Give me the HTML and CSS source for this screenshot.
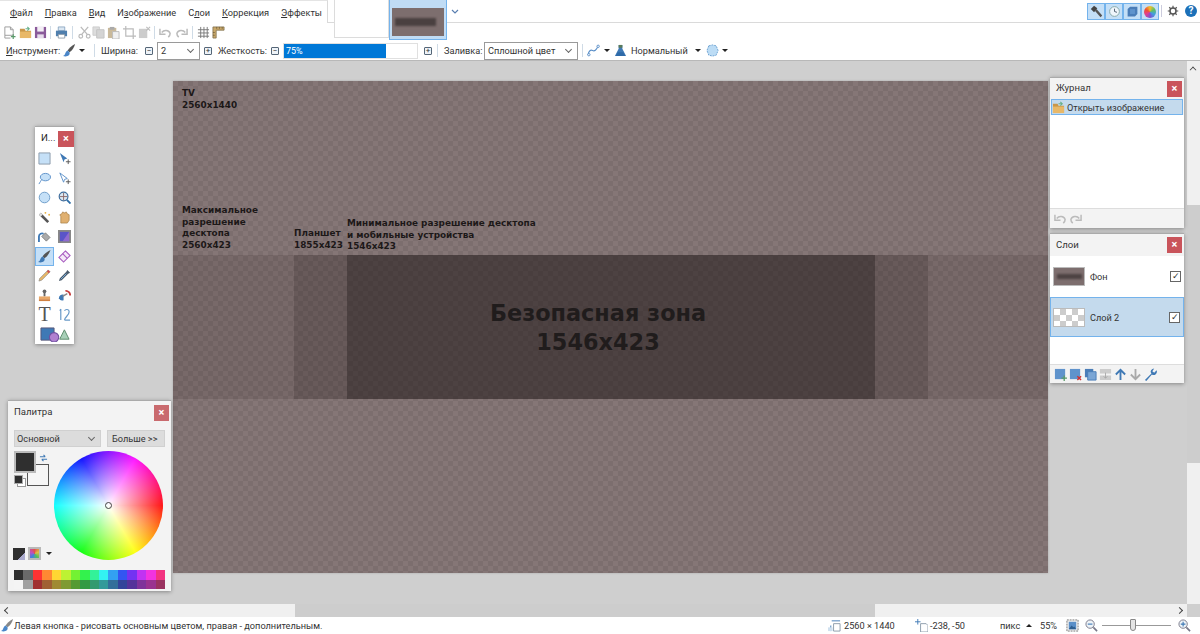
FILE: index.html
```html
<!DOCTYPE html>
<html lang="ru">
<head>
    <meta charset="UTF-8">
    <title>paint.net</title>
    <link rel="stylesheet" href="styles.css">
</head>
<body>
<div class="top">
    <!-- Меню и вкладки -->
    <div class="menu-row">
        <div class="menu-tab">
            <span><u>Ф</u>айл</span><span><u>П</u>равка</span><span><u>В</u>ид</span><span>И<u>з</u>ображение</span><span>С<u>л</u>ои</span><span><u>К</u>оррекция</span><span><u>Э</u>ффекты</span>
        </div>
        <div class="menu-right">
            <button class="toggle"><svg viewBox="0 0 16 16"><path d="M1 5l4-4 4 3-4 5z" fill="#444"/><path d="M6 7l2-2 7 8-2 2z" fill="#555"/></svg></button>
            <button class="toggle"><svg viewBox="0 0 16 16"><circle cx="8" cy="8" r="6" fill="#eef5fb" stroke="#8aa" stroke-width="1.2"/><path d="M8 4.500V8l3 1" fill="none" stroke="#456" stroke-width="1.1"/></svg></button>
            <button class="toggle"><svg viewBox="0 0 16 16"><path d="M5 2h9v9l-3 3H2V5z" fill="#4a7db8"/><path d="M5 5h6v6H5z" fill="#5f93cc"/></svg></button>
            <button class="toggle"><span class="mini-wheel"></span></button>
            <span class="top-sep"></span>
            <svg class="gear" viewBox="0 0 16 16"><circle cx="8" cy="8" r="4" fill="none" stroke="#555" stroke-width="2"/><path d="M8 1v3M8 12v3M1 8h3M12 8h3M3 3l2 2M11 11l2 2M13 3l-2 2M5 11l-2 2" stroke="#555" stroke-width="1.6"/></svg>
            <span class="help">?</span>
        </div>
    </div>

    <!-- Панель файлов -->
    <div class="tool-row">
        <svg class="ic m-new" viewBox="0 0 14 14"><path d="M2 1h6l3 3v6H2z M2 10v3h6" fill="#fff" stroke="#999"/><path d="M8 1v3h3" fill="none" stroke="#999"/><path d="M11 9v5M8.500 11.500h5" stroke="#5a9a6a" stroke-width="1.300"/></svg>
        <svg class="ic m-open" viewBox="0 0 14 14"><path d="M1 3h5l1 2h6v8H1z" fill="#c8964a"/><path d="M1 6h12v7H1z" fill="#e8b868"/><path d="M7 3h4M9 1l2 2-2 2" fill="none" stroke="#6ab08a" stroke-width="1.200"/></svg>
        <svg class="ic" viewBox="0 0 14 14"><path d="M1 1h12v12H1z" fill="#8a5a9a"/><path d="M3.500 1h7v5h-7z" fill="#f3eef5"/><path d="M3.500 9h7v4h-7z" fill="#e6dcea"/></svg>
        <span class="sep s-a"></span>
        <svg class="ic" viewBox="0 0 14 14"><path d="M3.500 1h7v4h-7z" fill="#dbe7f2" stroke="#7a99b8" stroke-width=".8"/><path d="M1 5h12v6H1z" fill="#4f7fae"/><path d="M3.500 9h7v4h-7z" fill="#fff" stroke="#7a8a9a" stroke-width=".8"/></svg>
        <span class="sep s-b"></span>
        <svg class="ic" viewBox="0 0 14 14"><path d="M3 1l7 8M11 1L4 9" stroke="#bbb" stroke-width="1.400"/><circle cx="3" cy="11" r="2" fill="none" stroke="#bbb" stroke-width="1.300"/><circle cx="11" cy="11" r="2" fill="none" stroke="#bbb" stroke-width="1.300"/></svg>
        <svg class="ic m-1" viewBox="0 0 14 14"><path d="M1 1h7v9H1z" fill="#ddd" stroke="#ccc"/><path d="M5 4h8v9H5z" fill="#d4d4d4" stroke="#c4c4c4"/></svg>
        <svg class="ic m-2" viewBox="0 0 14 14"><path d="M1 2h9v11H1z" fill="#c9b99a"/><path d="M3 1h5v3H3z" fill="#aaa"/><path d="M6 6h7v8H6z" fill="#f0f0f0" stroke="#bbb"/></svg>
        <svg class="ic m-3" viewBox="0 0 14 14"><path d="M3 0v11h11M0 3h11v11" fill="none" stroke="#bbb" stroke-width="1.300"/></svg>
        <svg class="ic m-2" viewBox="0 0 14 14"><path d="M1 3h9v10H1z" fill="#ccc"/><path d="M9 1l4 4M13 1L9 5" stroke="#bbb" stroke-width="1.200"/></svg>
        <span class="sep s-a"></span>
        <svg class="ic" viewBox="0 0 14 14"><path d="M3 7a5 4.500 0 0 1 9 1c0 2-1 3-2 4" fill="none" stroke="#bbb" stroke-width="1.600"/><path d="M1 3v6h6" fill="none" stroke="#bbb" stroke-width="1.600"/></svg>
        <svg class="ic m-3" viewBox="0 0 14 14"><path d="M11 7a5 4.500 0 0 0-9 1c0 2 1 3 2 4" fill="none" stroke="#bbb" stroke-width="1.600"/><path d="M13 3v6H7" fill="none" stroke="#bbb" stroke-width="1.600"/></svg>
        <span class="sep s-c"></span>
        <svg class="ic" viewBox="0 0 14 14"><path d="M4 1v12M7.500 1v12M11 1v12M1 4h12M1 7.500h12M1 11h12" stroke="#777"/></svg>
        <svg class="ic m-2" viewBox="0 0 14 14"><path d="M1 1h12v3.500H4.500V13H1z" fill="#c9a86a" stroke="#7a6a48" stroke-width=".8"/><path d="M5 1v2M8 1v2M11 1v2M1 7h2M1 10h2" stroke="#6a5a38" stroke-width=".8"/></svg>
    </div>

    <!-- Настройки инструмента -->
    <div class="option-row">
        <span class="lbl w-tool"><u>И</u>нструмент:</span>
        <svg class="ic o-brush" viewBox="0 0 14 14"><path d="M13 0C9 2 6 5 5 7l2 2c3-2 5-5 6-9z" fill="#555"/><path d="M5 7C2 8 3 12 0 13c4 1 8 0 7-4z" fill="#4a86c8"/></svg>
        <span class="arrow o-a1"></span>
        <span class="sep o-s1"></span>
        <span class="lbl w-37">Ширина:</span>
        <span class="step o-m1">−</span>
        <span class="combo c-width">2<i class="chev"></i></span>
        <span class="step o-p1">+</span>
        <span class="lbl w-47 o-l1">Жесткость:</span>
        <span class="step o-l1">−</span>
        <span class="slider"><span class="slider-fill" style="width: 102px">75%</span></span>
        <span class="step o-l1">+</span>
        <span class="sep o-s2"></span>
        <span class="lbl w-37">Заливка:</span>
        <span class="combo c-fill">Сплошной цвет<i class="chev"></i></span>
        <span class="sep o-s3"></span>
        <svg class="ic" viewBox="0 0 14 14"><path d="M1 12c1-5 3-6 5-5s4 0 6-5" fill="none" stroke="#5a8fc8" stroke-width="1.200"/><circle cx="2" cy="11.500" r="1.300" fill="#fff" stroke="#5a8fc8"/><circle cx="12" cy="2.500" r="1.300" fill="#fff" stroke="#5a8fc8"/></svg>
        <span class="arrow o-a2"></span>
        <svg class="ic o-a2" viewBox="0 0 14 14"><path d="M5 1h4v4l4 8H1l4-8z" fill="#3f79b5"/><path d="M5 1h4v3H5z" fill="#5a7a5a"/><path d="M4 9h6l2 4H2z" fill="#2e6aa8"/></svg>
        <span class="lbl w-56 o-a2">Нормальный</span>
        <span class="arrow o-a3"></span>
        <svg class="ic o-blob" viewBox="0 0 14 14"><path d="M3 2l4-1 4 1 2 5-2 5-4 1-4-1-2-5z" fill="#bcdcf5" stroke="#6aa0d0" stroke-dasharray="2 1"/></svg>
        <span class="arrow o-a1"></span>
    </div>

    <!-- Миниатюры изображений поверх панелей -->
    <div class="thumb thumb-blank"></div>
    <div class="thumb thumb-active"><div class="thumb-img"><div class="thumb-band"></div></div></div>
    <svg class="thumb-chev" viewBox="0 0 8 6"><path d="M1 1l3 3 3-3" fill="none" stroke="#5a7fb0" stroke-width="1.200"/></svg>
</div>

<div class="main">
    <div class="workspace">
        <div class="canvas">
            <div class="band band-outer"></div>
            <div class="band band-mid"></div>
            <div class="band band-inner"></div>
            <div class="label l-tv">TV<br>2560x1440</div>
            <div class="label l-max">Максимальное<br>разрешение<br>десктопа<br>2560x423</div>
            <div class="label l-tab">Планшет<br>1855x423</div>
            <div class="label l-min">Минимальное разрешение десктопа<br>и мобильные устройства<br>1546x423</div>
            <div class="label-big">Безопасная зона<br>1546x423</div>
        </div>
    </div>
    <div class="vscroll">
        <span class="sc-up"></span>
        <div class="vthumb"></div>
    </div>
</div>

<div class="hscroll">
    <span class="sc-left"></span>
    <div class="hthumb"></div>
    <span class="sc-right"></span>
    <div class="corner"></div>
</div>

<div class="status">
    <svg class="ic" viewBox="0 0 14 14"><path d="M13 0C9 2 6 5 5 7l2 2c3-2 5-5 6-9z" fill="#888"/><path d="M5 7C2 8 3 12 0 13c4 1 8 0 7-4z" fill="#4a86c8"/></svg>
    <span>Левая кнопка - рисовать основным цветом, правая - дополнительным.</span>
    <svg class="ic st-size" viewBox="0 0 14 14"><path d="M6 5h7v8H6z" fill="#fff" stroke="#8a9aaa"/><path d="M4 2h9M3 7v6" stroke="#3f79b5"/><path d="M0 9h5v4H0z" fill="#cfe0ef"/></svg>
    <span class="st-dim">2560 × 1440</span>
    <svg class="ic st-pos" viewBox="0 0 14 14"><path d="M6 5h6l2 2v7H6z" fill="#fff" stroke="#8a9aaa"/><path d="M3 0v6M0 3h6" stroke="#3f79b5"/></svg>
    <span class="st-xy">-238, -50</span>
    <span class="st-unit">пикс</span>
    <span class="arrow-up"></span>
    <span class="st-zoom">55%</span>
    <svg class="ic st-fit" viewBox="0 0 14 14"><path d="M1 1h12v12H1z" fill="#eee" stroke="#777" stroke-dasharray="2 1"/><path d="M3 3h8v8H3z" fill="#5a8fc8"/><path d="M3 11l3-4 2 2 1-1 2 3z" fill="#2f5f90"/></svg>
    <svg class="ic st-out" viewBox="0 0 14 14"><circle cx="5.500" cy="5.500" r="4.500" fill="#eef3f7" stroke="#778"/><path d="M3 5.500h5" stroke="#3f79b5" stroke-width="1.200"/><path d="M9 9l4 4" stroke="#778" stroke-width="1.800"/></svg>
    <span class="zoom-slider"><span class="zoom-knob"></span></span>
    <svg class="ic st-in" viewBox="0 0 14 14"><circle cx="5.500" cy="5.500" r="4.500" fill="#eef3f7" stroke="#778"/><path d="M3 5.500h5M5.500 3v5" stroke="#3f79b5" stroke-width="1.200"/><path d="M9 9l4 4" stroke="#778" stroke-width="1.800"/></svg>
</div>

<!-- Инструменты -->
<div class="win win-tools">
    <div class="win-title tools-title">И...<span class="close">×</span></div>
    <div class="tool-grid">
        <span class="cell"><svg viewBox="0 0 14 14"><path d="M1 1h12v12H1z" fill="#c5e0f7" stroke="#8a9aaa"/></svg></span>
        <span class="cell"><svg viewBox="0 0 14 14"><path d="M2 1l8 6-3 1-1 3z" fill="#3f79b5"/><path d="M11 8v5M8.500 10.500h5" stroke="#555"/></svg></span>
        <span class="cell"><svg viewBox="0 0 14 14"><ellipse cx="8" cy="5.500" rx="5.500" ry="4" fill="#c5e0f7" stroke="#5a8fc8"/><path d="M4 8c-1 2-2 3-3 5" fill="none" stroke="#5a8fc8"/></svg></span>
        <span class="cell"><svg viewBox="0 0 14 14"><path d="M2 1l8 6-3 1-1 3z" fill="#fff" stroke="#5a8fc8"/><path d="M11 8v5M8.500 10.500h5" stroke="#555"/></svg></span>
        <span class="cell"><svg viewBox="0 0 14 14"><circle cx="7" cy="7" r="5.700" fill="#c5e0f7" stroke="#6a9ac8"/></svg></span>
        <span class="cell"><svg viewBox="0 0 14 14"><circle cx="6" cy="6" r="4.700" fill="#dce8f2" stroke="#3f6f9f" stroke-width="1.300"/><path d="M6 2v8M2 6h8" stroke="#8a6a6a"/><path d="M9.500 9.500l4 4" stroke="#2f6fa8" stroke-width="2"/></svg></span>
        <span class="cell"><svg viewBox="0 0 14 14"><path d="M1 4l9 9 2-2-9-9z" fill="#555"/><path d="M1 4l2-2 2 2-2 2z" fill="#ddd"/><circle cx="8" cy="2" r="1" fill="#e8b040"/><circle cx="12" cy="4" r="1" fill="#e8b040"/></svg></span>
        <span class="cell"><svg viewBox="0 0 14 14"><path d="M3 13V6L2 4l2-1 1-2 2 1 2-1 1 2 2 1v6l-2 3z" fill="#e0b070" stroke="#a07840" stroke-width=".7"/></svg></span>
        <span class="cell"><svg viewBox="0 0 14 14"><path d="M8 3l5 5-4 4-5-5z" fill="#aaa" stroke="#666" stroke-width=".7"/><path d="M1 13V7c0-3 3-4 5-3" fill="none" stroke="#3f79b5" stroke-width="2"/></svg></span>
        <span class="cell"><svg viewBox="0 0 14 14"><path d="M0 0h14v14H0z" fill="#888"/><path d="M2 2h10v10H2z" fill="#5a55c8"/><path d="M12 2v10H5z" fill="#8f6ad0"/></svg></span>
        <span class="cell cell-on"><svg viewBox="0 0 14 14"><path d="M13.500 0C9 2 6 5 5 7l2 2c3-2 5-5 6.500-9z" fill="#555"/><path d="M5 7C2 8 3 12 0 13c4 1 8 0 7-4z" fill="#3f79b5"/></svg></span>
        <span class="cell"><svg viewBox="0 0 14 14"><path d="M8 1l5 5-7 7-5-5z" fill="#f4e8f8" stroke="#a85cc0" stroke-width="1.200"/><path d="M5 4l5 5" stroke="#a85cc0" stroke-width="1.200"/></svg></span>
        <span class="cell"><svg viewBox="0 0 14 14"><path d="M11 1l2 2-9 9-3 1 1-3z" fill="#e8b868" stroke="#888" stroke-width=".7"/><path d="M11 1l2 2-1.500 1.500-2-2z" fill="#d05050"/></svg></span>
        <span class="cell"><svg viewBox="0 0 14 14"><path d="M10 1l3 3-2 1-7 7-3 1 1-3 7-7z" fill="#4a5a6a"/><path d="M3 11l6-6" stroke="#7ab0e0"/></svg></span>
        <span class="cell"><svg viewBox="0 0 14 14"><circle cx="7" cy="2.500" r="2" fill="#666"/><path d="M6 4h2v4H6z" fill="#666"/><path d="M1 8h12v3H1z" fill="#e8a868"/><path d="M1 11h12v2H1z" fill="#d08040"/></svg></span>
        <span class="cell"><svg viewBox="0 0 14 14"><path d="M8 2a4.500 4.500 0 0 1 5 5" fill="none" stroke="#c84040" stroke-width="2"/><path d="M1 10a4 4 0 0 1 5-4v6a4 4 0 0 1-5-2z" fill="#3f79b5"/><path d="M5 8l5-3" stroke="#888" stroke-width="1.400"/></svg></span>
        <span class="cell tool-t">T</span>
        <span class="cell"><svg viewBox="0 0 14 14"><path d="M3 1v12M2 3l1-2M7 13c0-3 5-5 5-9 0-3-4-3-5-1M7 13h6" fill="none" stroke="#6a9ac8" stroke-width="1.300"/></svg></span>
        <span class="cell cell-wide"><svg viewBox="0 0 32 16"><path d="M1 1h14v13H1z" fill="#3f79b5" stroke="#557"/><circle cx="15" cy="11" r="5" fill="#b080d0" stroke="#7050a0" stroke-width="1.200"/><path d="M26 3l5 10H21z" fill="#a8d0b8" stroke="#5a8a6a"/></svg></span>
    </div>
</div>

<!-- Палитра -->
<div class="win win-colors">
    <div class="win-title colors-title">Палитра<span class="close close-dim">×</span></div>
    <div class="color-controls">
        <span class="gray-combo">Основной<i class="chev"></i></span>
        <span class="gray-btn">Больше &gt;&gt;</span>
    </div>
    <div class="color-mid">
        <div class="swatches">
            <span class="sw-second"></span>
            <span class="sw-first"></span>
            <svg class="sw-swap" viewBox="0 0 10 9"><path d="M1 3h6M5 1l2 2M9 6H3M5 8L3 6" fill="none" stroke="#3f79b5" stroke-width="1.200"/></svg>
            <span class="sw-reset"></span>
        </div>
        <div class="wheel"><span class="wheel-dot"></span></div>
    </div>
    <div class="color-tools">
        <span class="ct-a"></span>
        <span class="ct-b"></span>
        <span class="arrow ct-arrow"></span>
    </div>
    <div class="swatch-grid">
        <i style="background:#2f2f2f"></i><i style="background:#6a6a6a"></i><i style="background:#ff3333"></i><i style="background:#ff8833"></i><i style="background:#ffd633"></i><i style="background:#bdf233"></i><i style="background:#73f233"></i><i style="background:#33f24d"></i><i style="background:#33f299"></i><i style="background:#33f2f2"></i><i style="background:#33a0f2"></i><i style="background:#3355f2"></i><i style="background:#7333f2"></i><i style="background:#c033f2"></i><i style="background:#f233e0"></i><i style="background:#f23380"></i>
        <i style="background:#f4f4f4"></i><i style="background:#a0a0a0"></i><i style="background:#a03030"></i><i style="background:#a06033"></i><i style="background:#a08a33"></i><i style="background:#7f9a33"></i><i style="background:#559a33"></i><i style="background:#339a44"></i><i style="background:#339a70"></i><i style="background:#339a9a"></i><i style="background:#336f9a"></i><i style="background:#33449a"></i><i style="background:#55339a"></i><i style="background:#7f339a"></i><i style="background:#9a3390"></i><i style="background:#9a3360"></i>
    </div>
</div>

<!-- Журнал -->
<div class="win win-history">
    <div class="win-title side-title">Журнал<span class="close">×</span></div>
    <div class="hist-row">
        <svg class="ic" viewBox="0 0 14 14"><path d="M1 3h5l1 2h6v8H1z" fill="#c8964a"/><path d="M1 6h12v7H1z" fill="#e8b868"/><path d="M7 3h4M9 1l2 2-2 2" fill="none" stroke="#6ab08a" stroke-width="1.200"/></svg>
        Открыть изображение
    </div>
    <div class="hist-space"></div>
    <div class="win-foot">
        <svg class="ic" viewBox="0 0 14 14"><path d="M3 7a5 4.500 0 0 1 9 1c0 2-1 3-2 4" fill="none" stroke="#bbb" stroke-width="1.600"/><path d="M1 3v6h6" fill="none" stroke="#bbb" stroke-width="1.600"/></svg>
        <svg class="ic" viewBox="0 0 14 14"><path d="M11 7a5 4.500 0 0 0-9 1c0 2 1 3 2 4" fill="none" stroke="#bbb" stroke-width="1.600"/><path d="M13 3v6H7" fill="none" stroke="#bbb" stroke-width="1.600"/></svg>
    </div>
</div>

<!-- Слои -->
<div class="win win-layers">
    <div class="win-title side-title layers-title">Слои<span class="close">×</span></div>
    <div class="layer-row">
        <span class="layer-thumb lt-bg"><b></b></span>
        <span class="layer-name">Фон</span>
        <span class="check">✓</span>
    </div>
    <div class="layer-row layer-on">
        <span class="layer-thumb lt-empty"></span>
        <span class="layer-name">Слой 2</span>
        <span class="check">✓</span>
    </div>
    <div class="layer-space"></div>
    <div class="win-foot layer-foot">
        <svg class="ic" viewBox="0 0 14 14"><path d="M1 1h11v11H1z" fill="#5f93cc"/><path d="M11 8v6M8 11h6" stroke="#5a9a6a" stroke-width="1.400"/></svg>
        <svg class="ic" viewBox="0 0 14 14"><path d="M1 1h11v11H1z" fill="#5f93cc"/><path d="M9 9l4 4M13 9l-4 4" stroke="#d03030" stroke-width="1.500"/></svg>
        <svg class="ic" viewBox="0 0 14 14"><path d="M1 1h9v9H1z" fill="#4a7db8"/><path d="M4 4h9v9H4z" fill="#7aa5d5" stroke="#4a7db8"/></svg>
        <svg class="ic" viewBox="0 0 14 14"><path d="M1 1h12v5H1zM1 8h12v5H1z" fill="#ccc"/><path d="M7 5v6M5 9l2 2 2-2" fill="none" stroke="#aaa"/></svg>
        <svg class="ic" viewBox="0 0 14 14"><path d="M7 13V2M2 7l5-5 5 5" fill="none" stroke="#3f79b5" stroke-width="2"/></svg>
        <svg class="ic" viewBox="0 0 14 14"><path d="M7 1v11M2 7l5 5 5-5" fill="none" stroke="#aaa" stroke-width="2"/></svg>
        <svg class="ic" viewBox="0 0 14 14"><path d="M1 13l7-7a3.500 3.500 0 0 1 1-5l2-.5-2 3 2 1.500 2.500-2.500a3.500 3.500 0 0 1-5 4.500l-6 7z" fill="#3f79b5"/></svg>
    </div>
</div>
</body>
</html>
```

FILE: styles.css
```css
body, html {
    height: 100%;
    margin: 0;
    overflow: hidden;
}

body {
    position: relative;
    display: flex;
    flex-direction: column;
    font-family: Roboto, "Noto Sans", sans-serif;
    font-size: 9.2px;
    color: #333;
    background-color: #fff;
}

u {
    text-decoration: underline;
    text-underline-offset: 1px;
}

.ic {
    display: block;
    flex: none;
    width: 13px;
    height: 13px;
}

/* Верхняя часть */
.top {
    position: relative;
    height: 61px;
    box-sizing: border-box;
    border-bottom: 1px solid #b8b8b8;
    background-color: #fff;
}

.menu-row {
    display: flex;
    height: 23px;
    box-sizing: border-box;
    border-bottom: 1px solid #dadada;
}

.menu-tab {
    display: flex;
    align-items: center;
    gap: 12px;
    width: 328px;
    height: 23px;
    box-sizing: border-box;
    padding-left: 10px;
    border-right: 1px solid #dadada;
    border-top: 1px solid #e4e4e4;
    background-color: #fff;
    white-space: nowrap;
}

.menu-right {
    display: flex;
    align-items: flex-start;
    margin-left: auto;
    padding: 3px 3px 0 0;
}

.toggle {
    display: flex;
    align-items: center;
    justify-content: center;
    width: 18px;
    height: 17px;
    padding: 0;
    border: 1px solid #74b3ec;
    background-color: #c4dff7;
    box-sizing: border-box;
}

.toggle svg {
    width: 13px;
    height: 13px;
}

.mini-wheel {
    width: 12px;
    height: 12px;
    border-radius: 50%;
    background: conic-gradient(#f0c030, #60c060, #40a0e0, #8050d0, #e04090, #f05030, #f0c030);
}

.top-sep {
    width: 1px;
    height: 12px;
    margin: 2px 5px 0 2px;
    background-color: #ccd;
}

.gear {
    width: 12px;
    height: 12px;
    margin-top: 2px;
}

.help {
    width: 12px;
    height: 12px;
    margin: 2px 0 0 6px;
    border-radius: 50%;
    background-color: #1c70b8;
    color: #fff;
    font-size: 10px;
    font-weight: bold;
    line-height: 12px;
    text-align: center;
}

.tool-row {
    display: flex;
    align-items: center;
    height: 18px;
    padding-left: 3px;
}

.m-new { margin-right: 3px; }
.m-open { margin-right: 2px; }
.m-1 { margin-left: 1px; }
.m-2 { margin-left: 2px; }
.m-3 { margin-left: 3px; }

.sep {
    flex: none;
    width: 1px;
    height: 13px;
    background-color: #cfdbe6;
}

.s-a { margin: 0 4px 0 3px; }
.s-b { margin: 0 5px 0 4px; }
.s-c { margin: 0 4px 0 4px; }

.option-row {
    display: flex;
    align-items: center;
    height: 19px;
    padding-left: 6px;
    white-space: nowrap;
}

.lbl {
    flex: none;
}

.w-tool { width: 54px; }
.w-37 { width: 37px; }
.w-47 { width: 47px; }
.w-56 { width: 56px; }

.o-brush { margin-left: 3px; }

.arrow {
    flex: none;
    width: 0;
    height: 0;
    border-left: 3px solid transparent;
    border-right: 3px solid transparent;
    border-top: 3px solid #222;
}

.o-a1 { margin-left: 3px; }
.o-a2 { margin-left: 4px; }
.o-a3 { margin-left: 8px; }
.o-s1 { margin: 0 6px 0 9px; }
.o-s2 { margin: 0 6px 0 5px; }
.o-s3 { margin: 0 4px; }
.o-m1 { margin: 0 4px 0 7px; }
.o-p1 { margin-left: 4px; }
.o-l1 { margin-left: 6px; }
.o-blob { margin-left: 5px; }

.step {
    flex: none;
    display: flex;
    align-items: center;
    justify-content: center;
    width: 8px;
    height: 8px;
    border: 1px solid #567;
    box-sizing: border-box;
    border-radius: 1px;
    background-color: #eef3f8;
    font-size: 8px;
    line-height: 6px;
    overflow: hidden;
}

.combo {
    position: relative;
    flex: none;
    height: 18px;
    box-sizing: border-box;
    border: 1px solid #9a9a9a;
    padding-left: 3px;
    line-height: 15px;
    background-color: #fff;
}

.c-width { width: 43px; }

.c-fill {
    width: 94px;
    margin-left: 3px;
}

.chev {
    position: absolute;
    right: 6px;
    top: 4px;
    width: 4px;
    height: 4px;
    border-right: 1px solid #666;
    border-bottom: 1px solid #666;
    transform: rotate(45deg);
}

.slider {
    flex: none;
    display: block;
    width: 135px;
    height: 16px;
    margin-left: 4px;
    border: 1px solid #e0e0e0;
    box-sizing: border-box;
}

.slider-fill {
    display: block;
    height: 100%;
    background-color: #0078d7;
    color: #fff;
    font-size: 9px;
    line-height: 14px;
    padding-left: 2px;
    box-sizing: border-box;
}

.thumb {
    position: absolute;
    top: 0;
    box-sizing: border-box;
}

.thumb-blank {
    left: 334px;
    width: 55px;
    height: 38px;
    border: 1px solid #dcdcdc;
    border-top: none;
    background-color: #fff;
}

.thumb-active {
    left: 389px;
    width: 58px;
    height: 40px;
    border: 1px solid #74b3ec;
    border-top: none;
    background-color: #c0dcf5;
    padding: 8px 2px 0;
}

.thumb-img {
    position: relative;
    height: 28px;
    background-color: #7d6e6e;
}

.thumb-band {
    position: absolute;
    left: 3px;
    right: 8px;
    top: 10px;
    height: 8px;
    background-color: #4a4040;
    filter: blur(1px);
}

.thumb-chev {
    position: absolute;
    left: 451px;
    top: 9px;
    width: 8px;
    height: 6px;
}

/* Рабочая область */
.main {
    display: flex;
    height: 543px;
}

.workspace {
    flex: 1;
    padding: 20px 0 0 173px;
    background-color: #cfcfcf;
}

.canvas {
    position: relative;
    width: 875px;
    height: 492px;
    background-color: #807171;
    background-image: conic-gradient(#7c6e6e 25%, #857676 0 50%, #7c6e6e 0 75%, #857676 0);
    background-size: 10px 10px;
    box-shadow: 0 0 2px #a8a8a8;
    color: #1c1818;
}

.band {
    position: absolute;
    top: 174px;
    height: 144px;
}

.band-outer {
    left: 0;
    right: 0;
    background-color: rgba(40, 30, 30, 0.14);
}

.band-mid {
    left: 121px;
    width: 634px;
    background-color: rgba(40, 30, 30, 0.2);
}

.band-inner {
    left: 174px;
    width: 528px;
    background-color: rgba(30, 24, 24, 0.36);
}

.label {
    position: absolute;
    font-family: "DejaVu Sans", sans-serif;
    font-size: 8.9px;
    font-weight: bold;
    line-height: 11.5px;
    white-space: nowrap;
}

.l-tv { left: 9px; top: 7px; }
.l-max { left: 9px; top: 124px; }
.l-tab { left: 121px; top: 147px; }
.l-min { left: 174px; top: 137px; }

.label-big {
    position: absolute;
    left: 225px;
    top: 218px;
    width: 400px;
    font-family: "DejaVu Sans", sans-serif;
    font-size: 22.4px;
    font-weight: bold;
    line-height: 29px;
    text-align: center;
    color: #201c1c;
}

.vscroll {
    position: relative;
    width: 13px;
    background-color: #f0f0f0;
}

.sc-up {
    position: absolute;
    left: 3px;
    top: 6px;
    width: 5px;
    height: 5px;
    border-left: 1px solid #444;
    border-top: 1px solid #444;
    transform: rotate(45deg) scale(0.8);
}

.vthumb {
    position: absolute;
    left: 0;
    right: 0;
    top: 144px;
    height: 258px;
    background-color: #cdcdcd;
}

.hscroll {
    position: relative;
    display: flex;
    height: 13px;
    background-color: #f0f0f0;
}

.sc-left,
.sc-right {
    position: absolute;
    top: 4px;
    width: 4px;
    height: 4px;
    border-left: 1px solid #444;
    border-bottom: 1px solid #444;
    transform: rotate(45deg);
}

.sc-left { left: 5px; }

.sc-right {
    left: 1177px;
    transform: rotate(225deg);
}

.hthumb {
    width: 580px;
    margin-left: 295px;
    background-color: #cdcdcd;
}

.corner {
    width: 13px;
    margin-left: auto;
    background-color: #cfcfcf;
}

.status {
    display: flex;
    align-items: center;
    height: 17px;
    padding: 0 9px 0 1px;
    white-space: nowrap;
    background-color: #fff;
}

.st-size { margin-left: auto; }
.st-dim { width: 49px; margin-left: 3px; }
.st-pos { margin-left: 22px; }
.st-xy { width: 34px; margin-left: 2px; }
.st-unit { width: 20px; margin-left: 36px; }

.arrow-up {
    width: 0;
    height: 0;
    margin-left: 6px;
    border-left: 3px solid transparent;
    border-right: 3px solid transparent;
    border-bottom: 3px solid #222;
}

.st-zoom { width: 17px; margin-left: 8px; }
.st-fit { margin-left: 9px; }
.st-out { margin-left: 6px; }
.st-in { margin-left: 7px; }

.zoom-slider {
    position: relative;
    flex: none;
    width: 69px;
    height: 1px;
    margin-left: 4px;
    background-color: #999;
}

.zoom-knob {
    position: absolute;
    left: 28px;
    top: -6px;
    width: 6px;
    height: 12px;
    border: 1px solid #888;
    border-radius: 1px 1px 3px 3px;
    box-sizing: border-box;
    background-color: #e4e4e4;
}

/* Плавающие окна */
.win {
    position: absolute;
    box-sizing: border-box;
    background-color: #f3f3f3;
    border-top: 1px solid #aaa;
    box-shadow: 0 1px 4px rgba(0, 0, 0, 0.35);
}

.win-title {
    position: relative;
    font-size: 9.6px;
}

.close {
    position: absolute;
    top: 4px;
    right: 2px;
    width: 15px;
    height: 16px;
    background-color: #c9545b;
    color: #fff;
    font-size: 11px;
    font-weight: bold;
    line-height: 15px;
    text-align: center;
}

.close-dim {
    background-color: #c96a6e;
}

.win-tools {
    left: 35px;
    top: 126px;
    width: 39px;
    height: 218px;
    background-color: #fff;
}

.tools-title {
    height: 22px;
    padding: 5px 0 0 6px;
    box-sizing: border-box;
    color: #222;
}

.tools-title .close {
    right: 0;
    width: 16px;
}

.tool-grid {
    display: grid;
    grid-template-columns: 19px 20px;
    grid-auto-rows: 19.5px;
}

.cell {
    display: flex;
    align-items: center;
    justify-content: center;
}

.cell svg {
    width: 13px;
    height: 13px;
}

.cell-on {
    background-color: #c4dff7;
    outline: 1px solid #74b3ec;
    outline-offset: -1px;
}

.cell-wide {
    grid-column: span 2;
}

.cell-wide svg {
    width: 30px;
    height: 15px;
}

.tool-t {
    font-family: "Liberation Serif", serif;
    font-size: 20px;
    line-height: 19px;
    color: #555;
}

.win-colors {
    left: 8px;
    top: 400px;
    width: 163px;
    height: 191px;
}

.colors-title {
    height: 29px;
    padding: 5px 0 0 6px;
    box-sizing: border-box;
}

.color-controls {
    display: flex;
    gap: 6px;
    padding-left: 6px;
}

.gray-combo,
.gray-btn {
    position: relative;
    height: 17px;
    box-sizing: border-box;
    background-color: #dcdcdc;
    border: 1px solid #d0d0d0;
    line-height: 15px;
    padding-left: 2px;
    white-space: nowrap;
}

.gray-combo { width: 87px; }
.gray-btn { width: 58px; padding-left: 4px; }

.color-mid {
    display: flex;
    margin-top: 4px;
}

.swatches {
    position: relative;
    flex: none;
    width: 46px;
    height: 109px;
}

/* Образцы цвета лежат друг на друге */
.sw-first {
    position: absolute;
    left: 6px;
    top: 0;
    width: 22px;
    height: 22px;
    box-sizing: border-box;
    background-color: #2f2f2f;
    border: 2px solid #bbb;
}

.sw-second {
    position: absolute;
    left: 19px;
    top: 13px;
    width: 22px;
    height: 22px;
    box-sizing: border-box;
    background-color: #f6f6f6;
    border: 1px solid #555;
}

.sw-swap {
    position: absolute;
    left: 31px;
    top: 3px;
    width: 9px;
    height: 8px;
}

.sw-reset {
    position: absolute;
    left: 6px;
    top: 24px;
    width: 7px;
    height: 7px;
    background-color: #2f2f2f;
    border: 1px solid #aaa;
    box-shadow: 3px 3px 0 -1px #fff, 3px 3px 0 0 #999;
}

.wheel {
    position: relative;
    width: 109px;
    height: 109px;
    border-radius: 50%;
    background:
        radial-gradient(closest-side, #fff 0%, rgba(255, 255, 255, 0.62) 40%, rgba(255, 255, 255, 0.08) 100%),
        conic-gradient(#8000ff 0deg, #f0f 30deg, #f00 90deg, #ff0 150deg, #0f0 210deg, #0ff 270deg, #00f 330deg, #8000ff 360deg);
}

.wheel-dot {
    position: absolute;
    left: 51px;
    top: 51px;
    width: 7px;
    height: 7px;
    box-sizing: border-box;
    border: 1px solid #444;
    border-radius: 50%;
}

.color-tools {
    display: flex;
    align-items: center;
    height: 13px;
    margin-top: -13px;
    padding-left: 5px;
}

.ct-a {
    width: 12px;
    height: 12px;
    background: linear-gradient(135deg, #2f2f2f 70%, #aac 70%);
}

.ct-b {
    width: 13px;
    height: 13px;
    margin-left: 3px;
    box-sizing: border-box;
    border: 2px solid #b8b8b8;
    background: conic-gradient(#e05050, #e0c040, #50c060, #4080e0, #c050c0, #e05050);
}

.ct-arrow { margin-left: 5px; }

.swatch-grid {
    display: grid;
    grid-template-columns: repeat(16, 9.450px);
    grid-auto-rows: 9.500px;
    margin: 10px 0 0 6px;
}

.win-history {
    left: 1050px;
    top: 77px;
    width: 134px;
    height: 151px;
    display: flex;
    flex-direction: column;
}

.side-title {
    height: 21px;
    padding: 4px 0 0 6px;
    box-sizing: border-box;
}

.side-title .close {
    top: 3px;
}

.layers-title {
    height: 22px;
    padding-top: 5px;
}

.hist-row {
    display: flex;
    align-items: center;
    gap: 2px;
    height: 16px;
    margin: 0 1px;
    box-sizing: border-box;
    border: 1px solid #74b3ec;
    background-color: #c4daed;
    white-space: nowrap;
}

.hist-space {
    flex: 1;
    background-color: #fff;
}

.win-foot {
    display: flex;
    align-items: center;
    gap: 2px;
    height: 19px;
    padding-left: 4px;
    border-top: 1px solid #ddd;
}

.win-layers {
    left: 1050px;
    top: 233px;
    width: 134px;
    height: 150px;
    display: flex;
    flex-direction: column;
}

.layer-row {
    display: flex;
    align-items: center;
    height: 41px;
    padding-left: 3px;
    box-sizing: border-box;
    background-color: #fff;
}

.layer-on {
    height: 40px;
    border: 1px solid #74b3ec;
    background-color: #c4daed;
    padding-left: 2px;
}

.layer-thumb {
    position: relative;
    width: 32px;
    height: 19px;
    border: 1px solid #bbb;
    box-sizing: border-box;
}

.lt-bg {
    background-color: #7d6e6e;
}

.lt-bg b {
    position: absolute;
    left: 3px;
    right: 2px;
    top: 6px;
    height: 5px;
    background-color: #4d4343;
    filter: blur(1px);
}

.lt-empty {
    background-color: #fff;
    background-image: conic-gradient(#ccc 25%, #fff 0 50%, #ccc 0 75%, #fff 0);
    background-size: 12px 12px;
}

.layer-name {
    margin-left: 5px;
}

.check {
    width: 9px;
    height: 9px;
    margin-left: auto;
    margin-right: 3px;
    border: 1px solid #666;
    background-color: #fff;
    font-size: 9px;
    line-height: 9px;
    text-align: center;
}

.layer-space {
    flex: 1;
    background-color: #fff;
}

.layer-foot {
    height: 18px;
}
```
